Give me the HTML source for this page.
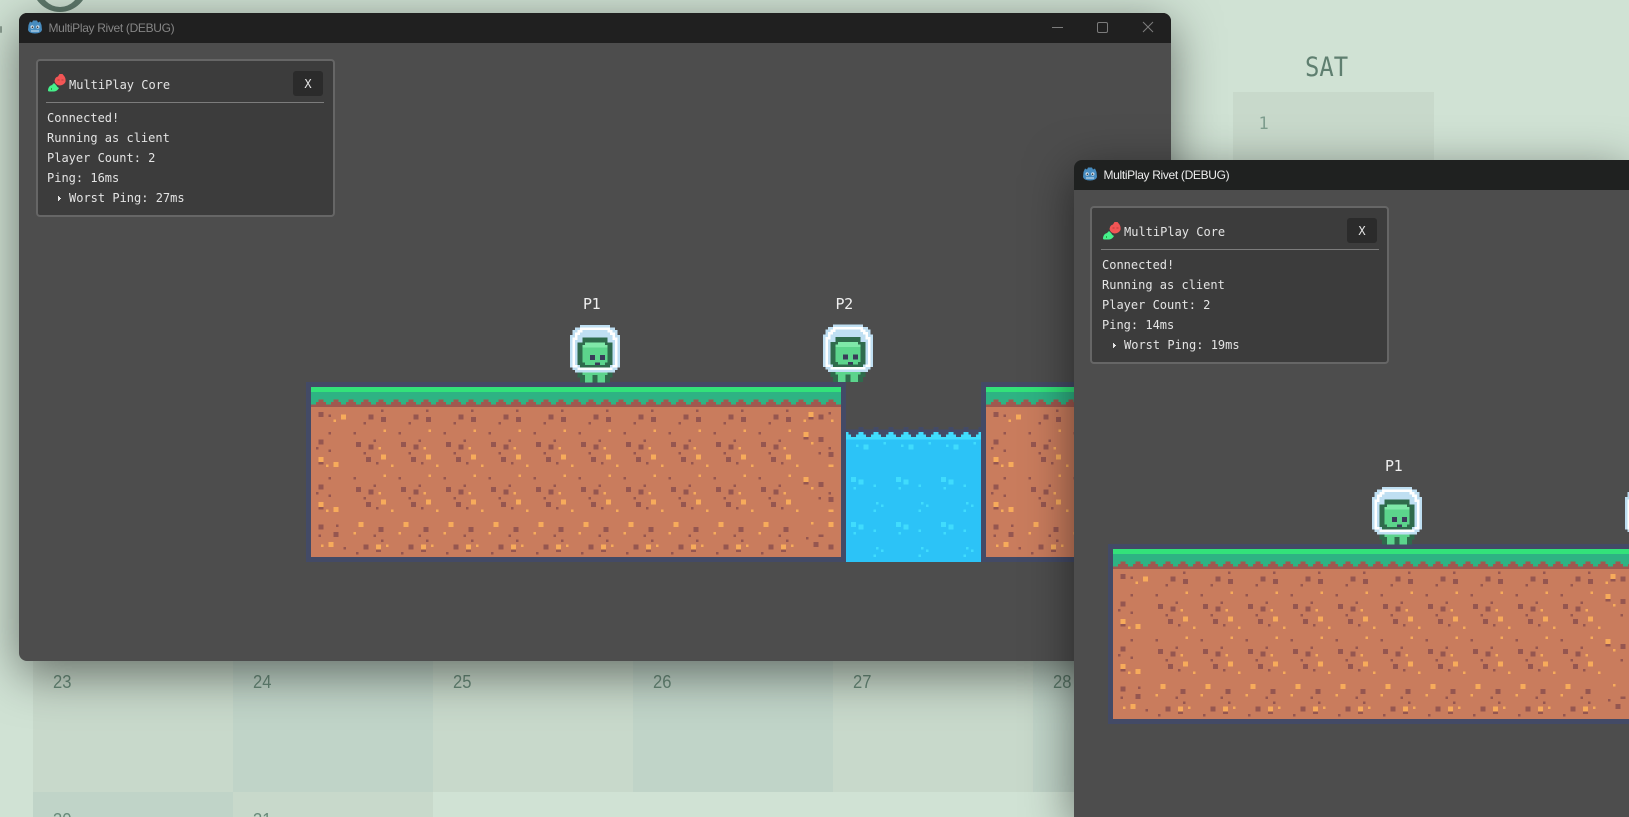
<!DOCTYPE html>
<html><head><meta charset="utf-8"><title>MultiPlay Rivet</title>
<style>
html,body{margin:0;padding:0;width:1629px;height:817px;overflow:hidden;background:#d0e2d4}
body{position:relative;font-family:"Liberation Sans",sans-serif}
.cell{position:absolute;width:200px;height:200px;background:#c8d9cb}
.alt{background:#c0d4c8}
.num{position:absolute;font-size:18px;color:#688a79;line-height:20px;transform:scaleX(.92);transform-origin:0 0}
.win{position:absolute;background:#4d4d4d;overflow:hidden;box-shadow:0 12px 48px rgba(0,0,0,.5)}
.bar{position:absolute;left:0;top:0;right:0;height:30px;background:#202020}
.ttl{position:absolute;left:29.5px;top:7px;font-size:12px;line-height:16px;white-space:nowrap;letter-spacing:-.33px}
.panel{position:absolute;width:295px;height:154px;background:#3c3c3c;border:2px solid #666;border-radius:4px;font-family:"DejaVu Sans Mono",monospace;font-size:12px;color:#e4e4e4}
.panel div{position:absolute;white-space:pre;line-height:20px}
.rule{height:1px;background:#7c7c7c;left:8px;width:278px;top:41px}
.x{left:255px;top:10px;width:30px;height:25px;background:#2b2b2b;border-radius:3px;text-align:center;line-height:26px!important}
.lbl{position:absolute;font-family:"DejaVu Sans Mono",monospace;font-size:15px;line-height:18px;color:#f0f0f0;letter-spacing:-.4px;white-space:nowrap}
svg{position:absolute;shape-rendering:crispEdges}
svg.smooth{shape-rendering:auto}
</style></head><body>

<svg class="smooth" style="left:0;top:0" width="120" height="40"><circle cx="60" cy="-16" r="28" fill="#5f7a6c"/><circle cx="60" cy="-12.6" r="19.6" fill="#d0e2d4"/><rect x="0" y="26" width="2" height="7" rx="1" fill="#8a9c90"/></svg>

<div class="cell" style="left:33px;top:592px"></div>
<div class="cell alt" style="left:233px;top:592px"></div>
<div class="cell" style="left:433px;top:592px"></div>
<div class="cell alt" style="left:633px;top:592px"></div>
<div class="cell" style="left:833px;top:592px"></div>
<div class="cell alt" style="left:1033px;top:592px"></div>
<div class="cell alt" style="left:33px;top:792px;height:25px"></div>
<div class="cell" style="left:233px;top:792px;height:25px"></div>
<div class="cell" style="left:1233px;top:92px;width:201px"></div>

<div class="num" style="left:53px;top:672px">23</div>
<div class="num" style="left:253px;top:672px">24</div>
<div class="num" style="left:453px;top:672px">25</div>
<div class="num" style="left:653px;top:672px">26</div>
<div class="num" style="left:853px;top:672px">27</div>
<div class="num" style="left:1053px;top:672px">28</div>
<div style="position:absolute;left:0;top:0;width:1629px;height:817px;overflow:hidden">
<div class="num" style="left:53px;top:810px">30</div>
<div class="num" style="left:253px;top:810px">31</div>
</div>
<div style="position:absolute;left:1258.5px;top:114px;font:17px/20px 'DejaVu Sans Mono',monospace;color:#7f9e8f">1</div>
<div style="position:absolute;left:1305px;top:51px;font:27px/34px 'DejaVu Sans Mono',monospace;color:#5f7f70;transform:scaleX(.885);transform-origin:0 0;white-space:nowrap">SAT</div>

<!-- WINDOW 1 -->
<div class="win" style="left:19px;top:13px;width:1152px;height:648px;border-radius:8px">
<div class="bar"></div>
<svg class="smooth" style="left:8px;top:6px" width="16" height="16" viewBox="0 0 16 16"><path d="M3 2.5 L5 3.5 L6 1.5 H10 L11 3.5 L13 2.5 L14.5 6 L15 11 Q14 14.5 8 14.5 Q2 14.5 1 11 L1.5 6 Z" fill="#478cbf"/><circle cx="5.2" cy="8" r="1.6" fill="#dfeaf3"/><circle cx="10.8" cy="8" r="1.6" fill="#dfeaf3"/><circle cx="5.4" cy="8.2" r=".8" fill="#333"/><circle cx="10.6" cy="8.2" r=".8" fill="#333"/><path d="M4 12 H12" stroke="#d5e6f2" stroke-width="1"/></svg>
<div class="ttl" style="color:#858585">MultiPlay Rivet (DEBUG)</div>
<svg style="left:1030px;top:8px" width="120" height="14"><rect x="3" y="6" width="11" height="1" fill="#7c7c7c"/></svg>
<svg class="smooth" style="left:1074px;top:8px" width="80" height="14"><rect x="4.5" y="1.5" width="10" height="10" rx="1.5" fill="none" stroke="#7c7c7c"/><path d="M50 1 L60 11 M60 1 L50 11" stroke="#7c7c7c" stroke-width="1" fill="none"/></svg>

<div class="panel" style="left:17px;top:46px">
<svg class="smooth" style="left:10px;top:12px" width="22" height="20" viewBox="0 0 22 20"><path d="M0 18 Q0 13 4 12 L6 10 L8 12 Q9 14 11 15 Q9 18.5 6 18.5 H1 Z" fill="#45f08a"/><path d="M6.5 8 Q7 4 10 3.5 L11.5 1 H14.5 L16.5 3.5 Q18 6 17.5 9 Q15.5 12.5 11.5 12.5 Q7.5 12 6.5 8Z" fill="#f25555"/><path d="M3 15h1v2H3z" fill="#2a4"/><path d="M9.5 7h2M13.5 7h2" stroke="#a33" stroke-width=".8" fill="none"/></svg>
<div style="left:31px;top:14px">MultiPlay Core</div>
<div class="x">X</div>
<div class="rule"></div>
<div style="left:9px;top:47px">Connected!</div>
<div style="left:9px;top:67px">Running as client</div>
<div style="left:9px;top:87px">Player Count: 2</div>
<div style="left:9px;top:107px">Ping: 16ms</div>
<div style="left:31px;top:127px">Worst Ping: 27ms</div>
<svg style="left:19px;top:134px" width="6" height="8"><path d="M1 1h1v1h1v1h1v1h-1v1h-1v1h-1z" fill="#e4e4e4"/></svg>
</div>

<svg style="left:-19px;top:-13px" width="1629" height="817" viewBox="0 0 1629 817">
<defs>
<clipPath id="cb"><rect x="0" y="0" width="212" height="68"/></clipPath>
<g id="teeth"><rect x="3" y="5" width="2" height="1"/><rect x="2" y="6" width="4" height="1"/><rect x="9" y="5" width="2" height="1"/><rect x="8" y="6" width="4" height="1"/><rect x="15" y="5" width="2" height="1"/><rect x="14" y="6" width="4" height="1"/></g>
<g id="dk">
<rect x="10" y="9" width="1" height="1"/><rect x="5" y="11" width="2" height="2"/><rect x="10" y="12" width="2" height="2"/><rect x="3" y="14" width="1" height="1"/><rect x="17" y="18" width="1" height="1"/><rect x="7" y="21" width="1" height="1"/><rect x="0" y="22" width="2" height="2"/><rect x="5" y="23" width="2" height="2"/><rect x="3" y="26" width="1" height="1"/><rect x="4" y="28" width="2" height="2"/><rect x="8" y="30" width="1" height="1"/>
<rect x="17" y="36" width="1" height="1"/><rect x="7" y="39" width="1" height="1"/><rect x="0" y="40" width="2" height="2"/><rect x="5" y="41" width="2" height="2"/><rect x="3" y="44" width="1" height="1"/><rect x="4" y="46" width="2" height="2"/><rect x="8" y="48" width="1" height="1"/>
<rect x="9" y="56" width="2" height="2"/><rect x="7" y="59" width="1" height="1"/><rect x="10" y="61" width="1" height="1"/><rect x="3" y="63" width="2" height="2"/><rect x="8" y="65" width="2" height="1"/><rect x="0" y="66" width="1" height="1"/>
</g>
<g id="or">
<rect x="11" y="17" width="1" height="1"/><rect x="9" y="24" width="1" height="1"/><rect x="10" y="27" width="2" height="2"/><rect x="14" y="31" width="1" height="1"/>
<rect x="11" y="35" width="1" height="1"/><rect x="9" y="42" width="1" height="1"/><rect x="10" y="45" width="2" height="2"/><rect x="14" y="49" width="1" height="1"/>
<rect x="1" y="54" width="2" height="2"/><rect x="17" y="58" width="1" height="1"/><rect x="8" y="63" width="2" height="2"/><rect x="12" y="63" width="1" height="1"/>
</g>
<g id="tile"><use href="#teeth" fill="#a0584f"/><use href="#dk" fill="#955650"/><use href="#or" fill="#f7ab5b"/></g>
<g id="first">
<rect x="0" y="8" width="18" height="60" fill="#c97c5d"/>
<g fill="#955650"><rect x="3" y="10" width="2" height="2"/><rect x="7" y="11" width="1" height="1"/><rect x="7" y="18" width="1" height="1"/><rect x="17" y="18" width="1" height="1"/><rect x="3" y="21" width="2" height="2"/><rect x="2" y="24" width="1" height="1"/><rect x="7" y="25" width="1" height="1"/><rect x="3" y="30" width="2" height="1"/>
<rect x="7" y="36" width="1" height="1"/><rect x="17" y="36" width="1" height="1"/><rect x="3" y="39" width="2" height="2"/><rect x="2" y="42" width="1" height="1"/><rect x="7" y="43" width="1" height="1"/><rect x="3" y="48" width="2" height="1"/>
<rect x="3" y="55" width="2" height="2"/><rect x="10" y="55" width="1" height="1"/><rect x="9" y="58" width="2" height="2"/><rect x="3" y="59" width="1" height="1"/><rect x="13" y="64" width="1" height="1"/></g>
<g fill="#f7ab5b"><rect x="9" y="13" width="1" height="1"/><rect x="12" y="11" width="2" height="2"/><rect x="3" y="28" width="2" height="2"/><rect x="6" y="31" width="1" height="1"/><rect x="9" y="30" width="2" height="2"/>
<rect x="3" y="46" width="2" height="2"/><rect x="6" y="49" width="1" height="1"/><rect x="9" y="48" width="2" height="2"/><rect x="17" y="58" width="1" height="1"/><rect x="7" y="62" width="2" height="2"/><rect x="4" y="63" width="1" height="1"/></g>
</g>
<g id="last">
<rect x="0" y="8" width="18" height="60" fill="#c97c5d"/>
<g fill="#955650"><rect x="5" y="12" width="2" height="1"/><rect x="9" y="11" width="2" height="2"/><rect x="13" y="10" width="1" height="1"/><rect x="3" y="20" width="2" height="1"/><rect x="9" y="20" width="2" height="2"/><rect x="13" y="24" width="1" height="1"/><rect x="9" y="26" width="1" height="1"/><rect x="13" y="26" width="2" height="2"/>
<rect x="3" y="38" width="2" height="1"/><rect x="9" y="38" width="2" height="2"/><rect x="13" y="42" width="1" height="1"/><rect x="9" y="44" width="1" height="1"/><rect x="13" y="44" width="2" height="2"/>
<rect x="4" y="60" width="1" height="1"/><rect x="9" y="59" width="2" height="1"/><rect x="7" y="62" width="2" height="2"/><rect x="13" y="63" width="2" height="2"/></g>
<g fill="#f7ab5b"><rect x="5" y="10" width="2" height="2"/><rect x="3" y="13" width="1" height="1"/><rect x="14" y="13" width="1" height="1"/><rect x="3" y="18" width="2" height="2"/><rect x="6" y="22" width="1" height="1"/><rect x="0" y="31" width="1" height="1"/><rect x="13" y="31" width="2" height="1"/>
<rect x="3" y="36" width="2" height="2"/><rect x="6" y="40" width="1" height="1"/><rect x="0" y="49" width="1" height="1"/><rect x="13" y="49" width="2" height="1"/><rect x="13" y="54" width="2" height="2"/><rect x="6" y="54" width="1" height="1"/></g>
</g>
<g id="blk">
<rect x="-2" y="-2" width="216" height="72" fill="#434a66"/>
<rect x="0" y="0" width="212" height="68" fill="#c97c5d"/>
<rect x="0" y="0" width="212" height="2" fill="#33e27a"/>
<rect x="0" y="2" width="212" height="5" fill="#2eb383"/>
<rect x="0" y="7" width="212" height="1" fill="#a0584f"/>
<g clip-path="url(#cb)">
<use href="#tile" x="0"/><use href="#tile" x="18"/><use href="#tile" x="36"/><use href="#tile" x="54"/><use href="#tile" x="72"/><use href="#tile" x="90"/><use href="#tile" x="108"/><use href="#tile" x="126"/><use href="#tile" x="144"/><use href="#tile" x="162"/><use href="#tile" x="180"/><use href="#tile" x="198"/>
</g>
<use href="#first" x="0"/>
<use href="#last" x="194"/>
</g>
<g id="hero">
<g fill="#bfdff2"><rect x="4" y="0" width="12" height="1"/><rect x="2" y="1" width="16" height="1"/><rect x="1" y="2" width="18" height="2"/><rect x="0" y="4" width="20" height="13"/><rect x="1" y="17" width="18" height="1"/><rect x="2" y="18" width="16" height="1"/></g>
<g fill="#fff"><rect x="4" y="1" width="12" height="1"/><rect x="3" y="2" width="2" height="1"/><rect x="15" y="2" width="2" height="1"/><rect x="2" y="3" width="2" height="1"/><rect x="16" y="3" width="2" height="1"/><rect x="2" y="4" width="1" height="2"/><rect x="17" y="4" width="1" height="2"/><rect x="1" y="5" width="1" height="11"/><rect x="18" y="5" width="1" height="11"/><rect x="1" y="16" width="2" height="1"/><rect x="17" y="16" width="2" height="1"/><rect x="3" y="17" width="14" height="1"/></g>
<g fill="#2f6b4c"><rect x="5" y="5" width="10" height="2"/><rect x="3" y="7" width="14" height="9"/><rect x="4" y="16" width="12" height="1"/><rect x="3" y="19" width="14" height="2"/><rect x="4" y="21" width="12" height="2"/></g>
<g fill="#7fe8a8"><rect x="6" y="7" width="8" height="1"/><rect x="5" y="8" width="10" height="1"/></g>
<g fill="#5cd48c"><rect x="5" y="9" width="10" height="6"/><rect x="6" y="15" width="8" height="1"/><rect x="5" y="19" width="10" height="1"/><rect x="6" y="20" width="3" height="3"/><rect x="11" y="20" width="3" height="3"/></g>
<g fill="#3a3a5a"><rect x="8" y="12" width="2" height="2"/><rect x="12" y="12" width="2" height="2"/><rect x="10" y="15" width="2" height="1"/></g>
</g>
</defs>
<g transform="translate(311 387) scale(2.5)"><use href="#blk"/></g>
<g transform="translate(986 387) scale(2.5)"><use href="#blk"/></g>
<g transform="translate(846 432) scale(2.5)">
<rect x="0" y="0" width="54" height="52" fill="#2cc3f7"/>
<rect x="0" y="-1" width="54" height="3" fill="#434a66"/>
<g fill="#434a66"><rect x="5" y="-2" width="2" height="1"/><rect x="11" y="-2" width="2" height="1"/><rect x="17" y="-2" width="2" height="1"/><rect x="23" y="-2" width="2" height="1"/><rect x="29" y="-2" width="2" height="1"/><rect x="35" y="-2" width="2" height="1"/><rect x="41" y="-2" width="2" height="1"/><rect x="47" y="-2" width="2" height="1"/><rect x="53" y="-2" width="1" height="1"/></g>
<rect x="0" y="2" width="54" height="1" fill="#40dcfd"/>
<g fill="#40dcfd"><rect x="5" y="0" width="2" height="1"/><rect x="4" y="1" width="4" height="1"/><rect x="11" y="0" width="2" height="1"/><rect x="10" y="1" width="4" height="1"/><rect x="17" y="0" width="2" height="1"/><rect x="16" y="1" width="4" height="1"/><rect x="23" y="0" width="2" height="1"/><rect x="22" y="1" width="4" height="1"/><rect x="29" y="0" width="2" height="1"/><rect x="28" y="1" width="4" height="1"/><rect x="35" y="0" width="2" height="1"/><rect x="34" y="1" width="4" height="1"/><rect x="41" y="0" width="2" height="1"/><rect x="40" y="1" width="4" height="1"/><rect x="47" y="0" width="2" height="1"/><rect x="46" y="1" width="4" height="1"/><rect x="0" y="1" width="2" height="1"/><rect x="52" y="1" width="2" height="1"/><rect x="0" y="0" width="1" height="1"/><rect x="53" y="0" width="1" height="1"/></g>
<g id="wt" fill="#40dcfd"><rect x="4" y="5" width="1" height="1"/><rect x="7" y="5" width="2" height="2"/><rect x="15" y="4" width="1" height="1"/><rect x="2" y="18" width="2" height="2"/><rect x="5" y="19" width="2" height="2"/><rect x="3" y="22" width="1" height="1"/><rect x="11" y="21" width="1" height="1"/><rect x="12" y="28" width="1" height="1"/><rect x="14" y="29" width="1" height="1"/><rect x="11" y="31" width="1" height="1"/><rect x="2" y="36" width="2" height="2"/><rect x="5" y="37" width="2" height="2"/><rect x="3" y="40" width="1" height="1"/><rect x="11" y="39" width="1" height="1"/><rect x="12" y="46" width="1" height="1"/><rect x="14" y="47" width="1" height="1"/><rect x="11" y="49" width="1" height="1"/></g>
<use href="#wt" x="18"/><use href="#wt" x="36"/>
</g>
<g transform="translate(570 325) scale(2.5)"><use href="#hero"/></g>
<g transform="translate(823 324.5) scale(2.5)"><use href="#hero"/></g>
</svg>
<div class="lbl" style="left:564px;top:282px">P1</div>
<div class="lbl" style="left:816.5px;top:282px">P2</div>
</div>

<!-- WINDOW 2 -->
<div class="win" style="left:1074px;top:160px;width:555px;height:657px;border-radius:8px 0 0 0">
<div class="bar" style="background:#1f2120"></div>
<svg class="smooth" style="left:8px;top:6px" width="16" height="16" viewBox="0 0 16 16"><path d="M3 2.5 L5 3.5 L6 1.5 H10 L11 3.5 L13 2.5 L14.5 6 L15 11 Q14 14.5 8 14.5 Q2 14.5 1 11 L1.5 6 Z" fill="#478cbf"/><circle cx="5.2" cy="8" r="1.6" fill="#dfeaf3"/><circle cx="10.8" cy="8" r="1.6" fill="#dfeaf3"/><circle cx="5.4" cy="8.2" r=".8" fill="#333"/><circle cx="10.6" cy="8.2" r=".8" fill="#333"/><path d="M4 12 H12" stroke="#d5e6f2" stroke-width="1"/></svg>
<div class="ttl" style="color:#ededed">MultiPlay Rivet (DEBUG)</div>

<div class="panel" style="left:16px;top:46px">
<svg class="smooth" style="left:11px;top:13px" width="22" height="20" viewBox="0 0 22 20"><path d="M0 18 Q0 13 4 12 L6 10 L8 12 Q9 14 11 15 Q9 18.5 6 18.5 H1 Z" fill="#45f08a"/><path d="M6.5 8 Q7 4 10 3.5 L11.5 1 H14.5 L16.5 3.5 Q18 6 17.5 9 Q15.5 12.5 11.5 12.5 Q7.5 12 6.5 8Z" fill="#f25555"/><path d="M3 15h1v2H3z" fill="#2a4"/><path d="M9.5 7h2M13.5 7h2" stroke="#a33" stroke-width=".8" fill="none"/></svg>
<div style="left:32px;top:14px">MultiPlay Core</div>
<div class="x">X</div>
<div class="rule" style="left:9px"></div>
<div style="left:10px;top:47px">Connected!</div>
<div style="left:10px;top:67px">Running as client</div>
<div style="left:10px;top:87px">Player Count: 2</div>
<div style="left:10px;top:107px">Ping: 14ms</div>
<div style="left:32px;top:127px">Worst Ping: 19ms</div>
<svg style="left:20px;top:134px" width="6" height="8"><path d="M1 1h1v1h1v1h1v1h-1v1h-1v1h-1z" fill="#e4e4e4"/></svg>
</div>

<svg style="left:-1074px;top:-160px" width="1629" height="817" viewBox="0 0 1629 817">
<g transform="translate(1113 549) scale(2.5)"><use href="#blk"/></g>
<g transform="translate(1372 487) scale(2.5)"><use href="#hero"/></g>
<g transform="translate(1625 487) scale(2.5)"><use href="#hero"/></g>
</svg>
<div class="lbl" style="left:311px;top:297px">P1</div>
</div>
</body></html>
